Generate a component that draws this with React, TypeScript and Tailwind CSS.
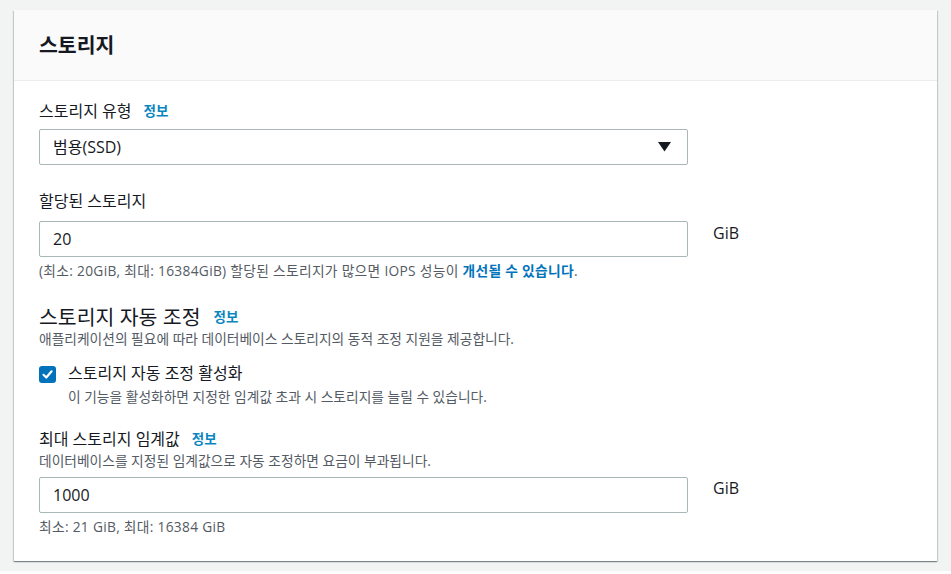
import React from "react";

const font = { fontFamily: '"Open Sans", "Noto Sans CJK KR", sans-serif' };

function Info({ className = "" }: { className?: string }) {
  return (
    <span className={"text-[13.5px] font-bold text-[#0a86bf] leading-5 " + className}>정보</span>
  );
}

export default function App() {
  return (
    <div
      className="w-[951px] h-[571px] bg-[#f2f3f3] pl-[14px] pr-[14px] pt-[10px] text-[#16191f]"
      style={font}
    >
      <div className="bg-white shadow-[0_1px_1px_0_rgba(0,28,36,0.3),1px_1px_1px_0_rgba(0,28,36,0.15),-1px_1px_1px_0_rgba(0,28,36,0.15)]">
        <div className="h-[71px] bg-[#fafafa] border-b border-[#eaeded] px-[25px] flex items-center">
          <h2 className="text-[20.5px] font-bold leading-7 text-[#16191f]">스토리지</h2>
        </div>
        <div className="px-[25px] pt-[19px] pb-[25px]">
          {/* Storage type */}
          <div className="flex items-center text-[16px] leading-[22px]">
            <span>스토리지 유형</span>
            <Info className="ml-[12px]" />
          </div>
          <div className="mt-[7px] w-[649px] h-[36px] border border-[#aab7b8] rounded-[2px] flex items-center justify-between pl-[13px] pr-[16px] text-[16px]">
            <span>범용(SSD)</span>
            <svg width="13" height="10" viewBox="0 0 13 10">
              <polygon points="0,0 13,0 6.5,9.5" fill="#16191f" />
            </svg>
          </div>

          {/* Allocated storage */}
          <div className="mt-[25px] text-[16px] leading-[22px]">할당된 스토리지</div>
          <div className="mt-[9px] flex items-start">
            <div className="w-[649px] h-[36px] border border-[#aab7b8] rounded-[2px] flex items-center pl-[13px] text-[16px]">
              20
            </div>
            <span className="ml-[25px] mt-[1px] text-[16px] leading-[22px]">GiB</span>
          </div>
          <div className="mt-[5px] text-[13.75px] leading-[18px] text-[#545b64] tracking-[0.3px]">
            (최소: 20GiB, 최대: 16384GiB) 할당된 스토리지가 많으면 IOPS 성능이{" "}
            <span className="font-bold text-[#0073bb]">개선될 수 있습니다</span>.
          </div>

          {/* Autoscaling */}
          <div className="mt-[24px] flex items-center">
            <span className="text-[20.5px] leading-[26px]">스토리지 자동 조정</span>
            <Info className="ml-[13px]" />
          </div>
          <div className="mt-0 text-[13.75px] leading-[18px] text-[#545b64]">
            애플리케이션의 필요에 따라 데이터베이스 스토리지의 동적 조정 지원을 제공합니다.
          </div>
          <div className="mt-[14px] flex items-start">
            <div className="mt-[4px] w-[17px] h-[17px] rounded-[3px] bg-[#0073bb] flex items-center justify-center shrink-0">
              <svg width="13" height="13" viewBox="0 0 13 13">
                <path d="M2.5 6.8 L5.3 9.5 L10.6 3.3" fill="none" stroke="#ffffff" strokeWidth="2.2" strokeLinecap="round" strokeLinejoin="round" />
              </svg>
            </div>
            <div className="ml-[12px]">
              <div className="text-[16px] leading-[22px]">스토리지 자동 조정 활성화</div>
              <div className="mt-[4px] text-[13.75px] leading-[18px] text-[#545b64]">
                이 기능을 활성화하면 지정한 임계값 초과 시 스토리지를 늘릴 수 있습니다.
              </div>
            </div>
          </div>

          {/* Max threshold */}
          <div className="mt-[22px] flex items-center text-[16px] leading-[22px]">
            <span>최대 스토리지 임계값</span>
            <Info className="ml-[12px]" />
          </div>
          <div className="mt-[2px] text-[13.75px] leading-[18px] text-[#545b64]">
            데이터베이스를 지정된 임계값으로 자동 조정하면 요금이 부과됩니다.
          </div>
          <div className="mt-[7px] flex items-start">
            <div className="w-[649px] h-[36px] border border-[#aab7b8] rounded-[2px] flex items-center pl-[13px] text-[16px]">
              1000
            </div>
            <span className="ml-[25px] mt-0 text-[16px] leading-[22px]">GiB</span>
          </div>
          <div className="mt-[5px] text-[13.75px] leading-[18px] text-[#545b64] tracking-[0.3px]">
            최소: 21 GiB, 최대: 16384 GiB
          </div>
        </div>
      </div>
    </div>
  );
}
